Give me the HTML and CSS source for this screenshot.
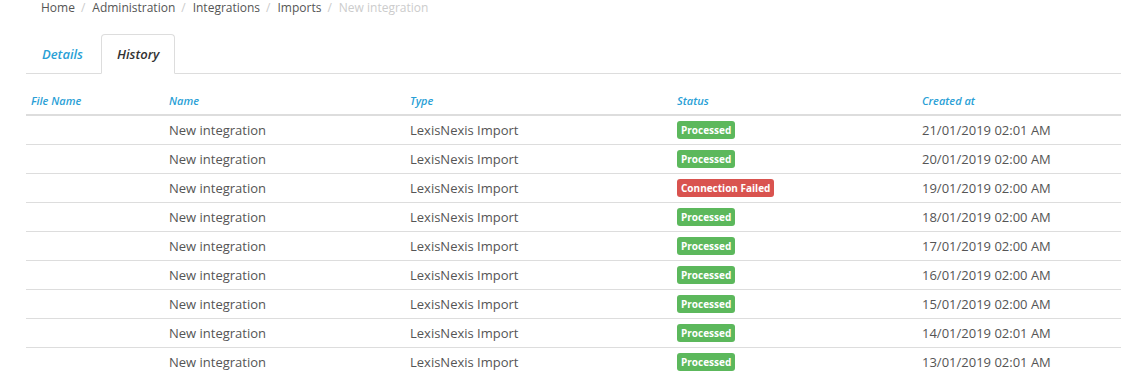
FILE: index.html
```html
<!DOCTYPE html>
<html lang="en">
<head>
  <meta charset="UTF-8" />
  <title>New integration - History</title>
  <link rel="stylesheet" href="styles.css">
</head>
<body>
  <div class="page">
    <ol class="breadcrumb">
      <li><a href="#">Home</a></li>
      <li><a href="#">Administration</a></li>
      <li><a href="#">Integrations</a></li>
      <li><a href="#">Imports</a></li>
      <li class="active">New integration</li>
    </ol>

    <ul class="nav-tabs">
      <li><a href="#">Details</a></li>
      <li class="active"><a href="#">History</a></li>
    </ul>

    <table class="history">
      <colgroup>
        <col class="col-file">
        <col class="col-name">
        <col class="col-type">
        <col class="col-status">
        <col>
      </colgroup>
      <thead>
        <tr>
          <th>File Name</th>
          <th>Name</th>
          <th>Type</th>
          <th>Status</th>
          <th>Created at</th>
        </tr>
      </thead>
      <tbody>
        <tr><td></td><td>New integration</td><td>LexisNexis Import</td><td><span class="label ok">Processed</span></td><td>21/01/2019 02:01 AM</td></tr>
        <tr><td></td><td>New integration</td><td>LexisNexis Import</td><td><span class="label ok">Processed</span></td><td>20/01/2019 02:00 AM</td></tr>
        <tr><td></td><td>New integration</td><td>LexisNexis Import</td><td><span class="label fail">Connection Failed</span></td><td>19/01/2019 02:00 AM</td></tr>
        <tr><td></td><td>New integration</td><td>LexisNexis Import</td><td><span class="label ok">Processed</span></td><td>18/01/2019 02:00 AM</td></tr>
        <tr><td></td><td>New integration</td><td>LexisNexis Import</td><td><span class="label ok">Processed</span></td><td>17/01/2019 02:00 AM</td></tr>
        <tr><td></td><td>New integration</td><td>LexisNexis Import</td><td><span class="label ok">Processed</span></td><td>16/01/2019 02:00 AM</td></tr>
        <tr><td></td><td>New integration</td><td>LexisNexis Import</td><td><span class="label ok">Processed</span></td><td>15/01/2019 02:00 AM</td></tr>
        <tr><td></td><td>New integration</td><td>LexisNexis Import</td><td><span class="label ok">Processed</span></td><td>14/01/2019 02:01 AM</td></tr>
        <tr><td></td><td>New integration</td><td>LexisNexis Import</td><td><span class="label ok">Processed</span></td><td>13/01/2019 02:01 AM</td></tr>
      </tbody>
    </table>
  </div>
</body>
</html>
```

FILE: styles.css
```css
body {
  font-family: "Open Sans", Arial, sans-serif;
  font-size: 13px;
  color: #555;
  margin: 0;
  padding: 0;
  background-color: white;
}
a {
  color: #555;
  text-decoration: none;
}
.page {
  padding-left: 26px;
}
.breadcrumb {
  list-style: none;
  margin: 0;
  padding: 0 15px;
  display: flex;
  font-size: 12px;
  line-height: 16px;
}
.breadcrumb li + li::before {
  content: "/";
  color: #ccc;
  padding: 0 7px 0 6px;
}
.breadcrumb li.active {
  color: #ccc;
}
.nav-tabs {
  list-style: none;
  margin: 18px 0 0;
  padding: 0;
  display: flex;
  border-bottom: 1px solid #ddd;
}
.nav-tabs li {
  margin-right: 2px;
  margin-bottom: -1px;
}
.nav-tabs a {
  display: block;
  padding: 10px 15px;
  line-height: 18px;
  font-weight: 600;
  font-style: italic;
  color: #2a9fd6;
  border: 1px solid transparent;
  border-radius: 4px 4px 0 0;
}
.nav-tabs li.active a {
  color: #333;
  background-color: white;
  border-color: #ddd;
  border-bottom-color: white;
}
table.history {
  width: 1095px;
  border-collapse: collapse;
  margin-top: 14px;
}
.col-file { width: 138px; }
.col-name { width: 241px; }
.col-type { width: 267px; }
.col-status { width: 245px; }
table.history th {
  text-align: left;
  font-size: 11px;
  font-weight: 600;
  font-style: italic;
  color: #2a9fd6;
  padding: 5px;
  line-height: 16px;
  border-bottom: 2px solid #ddd;
}
table.history td {
  padding: 5px;
  height: 18px;
  line-height: 18px;
  border-top: 1px solid #ddd;
}
table.history tbody tr:first-child td {
  border-top: none;
}
.label {
  display: inline-block;
  vertical-align: top;
  font-size: 10px;
  font-weight: 700;
  line-height: 12px;
  padding: 3px 4px;
  border-radius: 3px;
  color: white;
}
.label.ok {
  background-color: #5cb85c;
}
.label.fail {
  background-color: #d9534f;
}
```
